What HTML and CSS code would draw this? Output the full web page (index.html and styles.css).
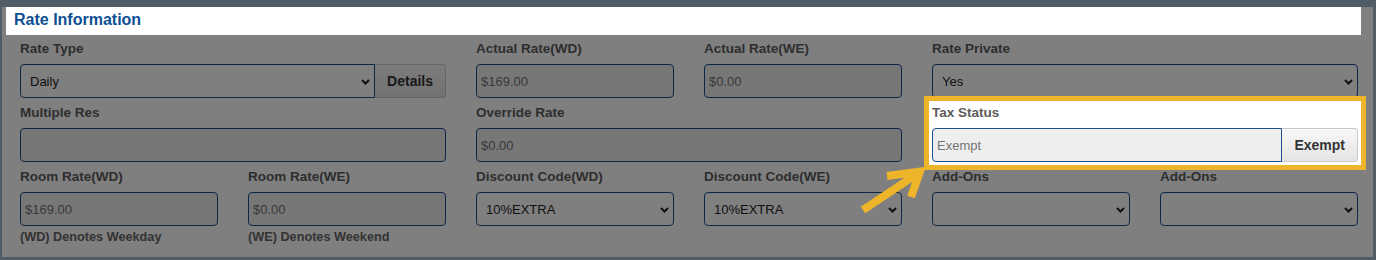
FILE: index.html
```html
<!DOCTYPE html>
<html lang="en">
<head>
    <meta charset="UTF-8">
    <title>Rate Information</title>
    <meta name="viewport" content="width=device-width, initial-scale=1">
    <link rel="stylesheet" href="styles.css">
</head>
<body>
    <div class="frame">
        <main class="page">
            <h2 class="section-title">Rate Information</h2>
            <div class="grid">
                <div class="field span-2">
                    <label for="rate-type">Rate Type</label>
                    <div class="combo">
                        <span class="select">
                            <select id="rate-type"><option>Daily</option></select>
                            <svg class="chevron" width="9" height="6" viewBox="0 0 9 6"><path d="M1 1l3.5 3.5L8 1"/></svg>
                        </span>
                        <button class="addon-btn">Details</button>
                    </div>
                </div>
                <div class="field">
                    <label for="actual-wd">Actual Rate(WD)</label>
                    <input id="actual-wd" class="readonly" type="text" value="$169.00" readonly>
                </div>
                <div class="field">
                    <label for="actual-we">Actual Rate(WE)</label>
                    <input id="actual-we" class="readonly" type="text" value="$0.00" readonly>
                </div>
                <div class="field span-2">
                    <label for="rate-private">Rate Private</label>
                    <span class="select">
                        <select id="rate-private"><option>Yes</option></select>
                        <svg class="chevron" width="9" height="6" viewBox="0 0 9 6"><path d="M1 1l3.5 3.5L8 1"/></svg>
                    </span>
                </div>

                <div class="field span-2">
                    <label for="multiple-res">Multiple Res</label>
                    <input id="multiple-res" class="readonly" type="text" value="" readonly>
                </div>
                <div class="field span-2">
                    <label for="override">Override Rate</label>
                    <input id="override" class="readonly" type="text" value="$0.00" readonly>
                </div>
                <div class="field span-2 spotlight">
                    <label for="tax-status">Tax Status</label>
                    <div class="combo">
                        <input id="tax-status" class="readonly" type="text" value="Exempt" readonly>
                        <button class="addon-btn">Exempt</button>
                    </div>
                </div>

                <div class="field">
                    <label for="room-wd">Room Rate(WD)</label>
                    <input id="room-wd" class="readonly" type="text" value="$169.00" readonly>
                    <p class="note">(WD) Denotes Weekday</p>
                </div>
                <div class="field">
                    <label for="room-we">Room Rate(WE)</label>
                    <input id="room-we" class="readonly" type="text" value="$0.00" readonly>
                    <p class="note">(WE) Denotes Weekend</p>
                </div>
                <div class="field">
                    <label for="disc-wd">Discount Code(WD)</label>
                    <span class="select">
                        <select id="disc-wd"><option>10%EXTRA</option></select>
                        <svg class="chevron" width="9" height="6" viewBox="0 0 9 6"><path d="M1 1l3.5 3.5L8 1"/></svg>
                    </span>
                </div>
                <div class="field">
                    <label for="disc-we">Discount Code(WE)</label>
                    <span class="select">
                        <select id="disc-we"><option>10%EXTRA</option></select>
                        <svg class="chevron" width="9" height="6" viewBox="0 0 9 6"><path d="M1 1l3.5 3.5L8 1"/></svg>
                    </span>
                </div>
                <div class="field">
                    <label for="addons-1">Add-Ons</label>
                    <span class="select">
                        <select id="addons-1"><option></option></select>
                        <svg class="chevron" width="9" height="6" viewBox="0 0 9 6"><path d="M1 1l3.5 3.5L8 1"/></svg>
                    </span>
                </div>
                <div class="field">
                    <label for="addons-2">Add-Ons</label>
                    <span class="select">
                        <select id="addons-2"><option></option></select>
                        <svg class="chevron" width="9" height="6" viewBox="0 0 9 6"><path d="M1 1l3.5 3.5L8 1"/></svg>
                    </span>
                </div>
            </div>

            <div class="backdrop"></div>

            <!-- callout arrow pointing at the tax status box -->
            <svg class="callout" width="80" height="55" viewBox="855 160 80 55">
                <path d="M863 205L914 171"/>
                <path d="M887 171L920 166.5L911 192"/>
            </svg>
        </main>
    </div>
</body>
</html>
```

FILE: styles.css
```css
* {
    box-sizing: border-box;
}
body {
    margin: 0;
    padding: 0;
    background: #4f5e66;
}
body, input, select, button {
    font-family: "Liberation Sans", Arial, Helvetica, sans-serif;
    font-size: 13px;
}
.frame {
    width: 1376px;
    height: 260px;
    border: solid #4f5e66;
    border-width: 2px 3px 3px 2px;
    overflow: hidden;
}
.page {
    position: relative;
    height: 100%;
    background: #fff;
}
.section-title {
    position: relative;
    z-index: 2;
    margin: 5px 12px 0 4px;
    height: 28px;
    padding-left: 8px;
    background: #fff;
    color: #0d4f94;
    font-size: 16px;
    line-height: 26px;
    font-weight: bold;
}
.grid {
    display: grid;
    grid-template-columns: repeat(6, 198px);
    column-gap: 30px;
    row-gap: 6px;
    padding: 5px 0 0 18px;
    align-items: start;
}
.span-2 {
    grid-column: span 2;
}
.field {
    display: flex;
    flex-direction: column;
}
.field label {
    color: #5c5c5c;
    font-size: 13.5px;
    font-weight: bold;
    line-height: 18px;
    margin-bottom: 6px;
}
.field input, .field select {
    width: 100%;
    height: 34px;
    margin: 0;
    border: 1px solid #1b4f8c;
    border-radius: 4px;
    outline: none;
}
.readonly {
    padding: 0 4px;
    background: #eee;
    color: #747474;
}
.select {
    position: relative;
    display: block;
    width: 100%;
}
.select select {
    appearance: none;
    -webkit-appearance: none;
    padding: 0 20px 0 9px;
    background: #fff;
    color: #1e1e1e;
}
.chevron {
    position: absolute;
    right: 5px;
    top: 15px;
    fill: none;
    stroke: #1e1e1e;
    stroke-width: 2;
}
.combo {
    display: flex;
}
.combo .select, .combo input {
    flex: 1;
    width: auto;
}
.combo select, .combo input {
    border-radius: 4px 0 0 4px;
}
.addon-btn {
    height: 34px;
    padding: 0 12px;
    border: 1px solid #c9c9c9;
    border-left: none;
    border-radius: 0 4px 4px 0;
    background: linear-gradient(#f8f8f8, #e4e4e4);
    color: #333;
    font-size: 14px;
    font-weight: bold;
}
.note {
    margin: 3px 0 0;
    color: #666;
    font-size: 12.7px;
    font-weight: bold;
    line-height: 16px;
}
.spotlight {
    position: relative;
    z-index: 2;
    background: #fff;
    box-shadow: 0 0 0 3px #fff, 0 0 0 8px #efb52a;
}
.backdrop {
    position: absolute;
    inset: 0;
    z-index: 1;
    background: rgba(0, 0, 0, 0.5);
}
.callout {
    position: absolute;
    left: 853px;
    top: 158px;
    z-index: 3;
    fill: none;
    stroke: #efb52a;
    stroke-width: 8;
}
```
